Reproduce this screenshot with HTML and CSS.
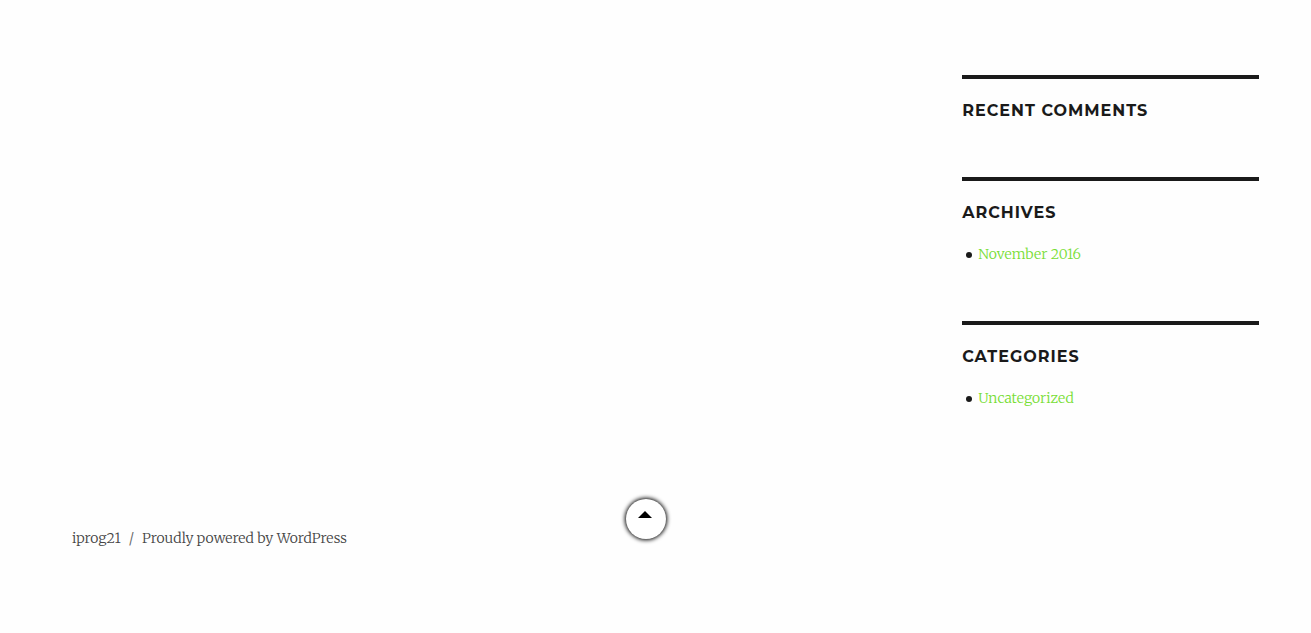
FILE: index.html
```
<!DOCTYPE html>
<html lang="en">
<head>
    <meta charset="UTF-8">
    <meta name="viewport" content="width=device-width, initial-scale=1.0">
    <title>iprog21</title>
    <link rel="stylesheet" href="styles.css">
</head>
<body>
    <div class="site">
        <div class="site-content">
            <main class="content-area"></main>
            <aside class="sidebar">
                <section class="widget">
                    <h2 class="widget-title">Recent Comments</h2>
                </section>
                <section class="widget">
                    <h2 class="widget-title">Archives</h2>
                    <ul>
                        <li><a href="#">November 2016</a></li>
                    </ul>
                </section>
                <section class="widget">
                    <h2 class="widget-title">Categories</h2>
                    <ul>
                        <li><a href="#">Uncategorized</a></li>
                    </ul>
                </section>
            </aside>
        </div>
        <footer class="site-footer">
            <a class="site-title" href="#">iprog21</a>
            <span class="separator">/</span>
            <a href="#">Proudly powered by WordPress</a>
        </footer>
    </div>
    <button class="back-to-top" type="button" aria-label="Back to top">
        <svg width="14" height="7" viewBox="0 0 14 7" aria-hidden="true">
            <path d="M7 0L14 7H0Z"/>
        </svg>
    </button>
</body>
</html>
```
FILE: styles.css
```
* {
    box-sizing: border-box;
}
body {
    margin: 0;
    background-color: #fefefe;
    color: #1a1a1a;
    font-family: Merriweather, "DejaVu Serif Condensed", "DejaVu Serif", serif;
    font-size: 14px;
    font-weight: 300;
    line-height: 21px;
}
a {
    color: #77dd33;
    text-decoration: none;
}
a:hover {
    text-decoration: underline;
}
.site {
    padding: 75px 52px 84px 72px;
}
.site-content {
    display: flex;
}
.content-area {
    flex: 3;
}
.sidebar {
    flex: 1;
}
.widget {
    margin-bottom: 56px;
    padding-top: 21px;
    border-top: 4px solid #1a1a1a;
}
.widget-title {
    margin: 0;
    font-family: Montserrat, Lato, sans-serif;
    font-size: 16px;
    font-weight: 700;
    line-height: 21px;
    letter-spacing: 1px;
    text-transform: uppercase;
}
.widget ul {
    margin: 21px 0 0;
    padding-left: 4px;
    list-style: none;
}
.widget li {
    display: flex;
    align-items: center;
    gap: 6px;
}
.widget li::before {
    content: "";
    width: 6px;
    height: 6px;
    border-radius: 50%;
    background: #1a1a1a;
}
.site-footer {
    display: flex;
    gap: 8px;
    margin-top: 63px;
}
.site-footer a {
    color: #444;
}
.separator {
    color: #686868;
}
/* floats over the page, near the middle of the window */
.back-to-top {
    position: fixed;
    bottom: 94px;
    left: 50%;
    display: flex;
    justify-content: center;
    width: 40px;
    height: 40px;
    margin-left: -30px;
    padding: 12px 2px 0 0;
    border: none;
    border-radius: 50%;
    background: #fff;
    box-shadow: 0 0 4px 1px #000;
    cursor: pointer;
}
```
